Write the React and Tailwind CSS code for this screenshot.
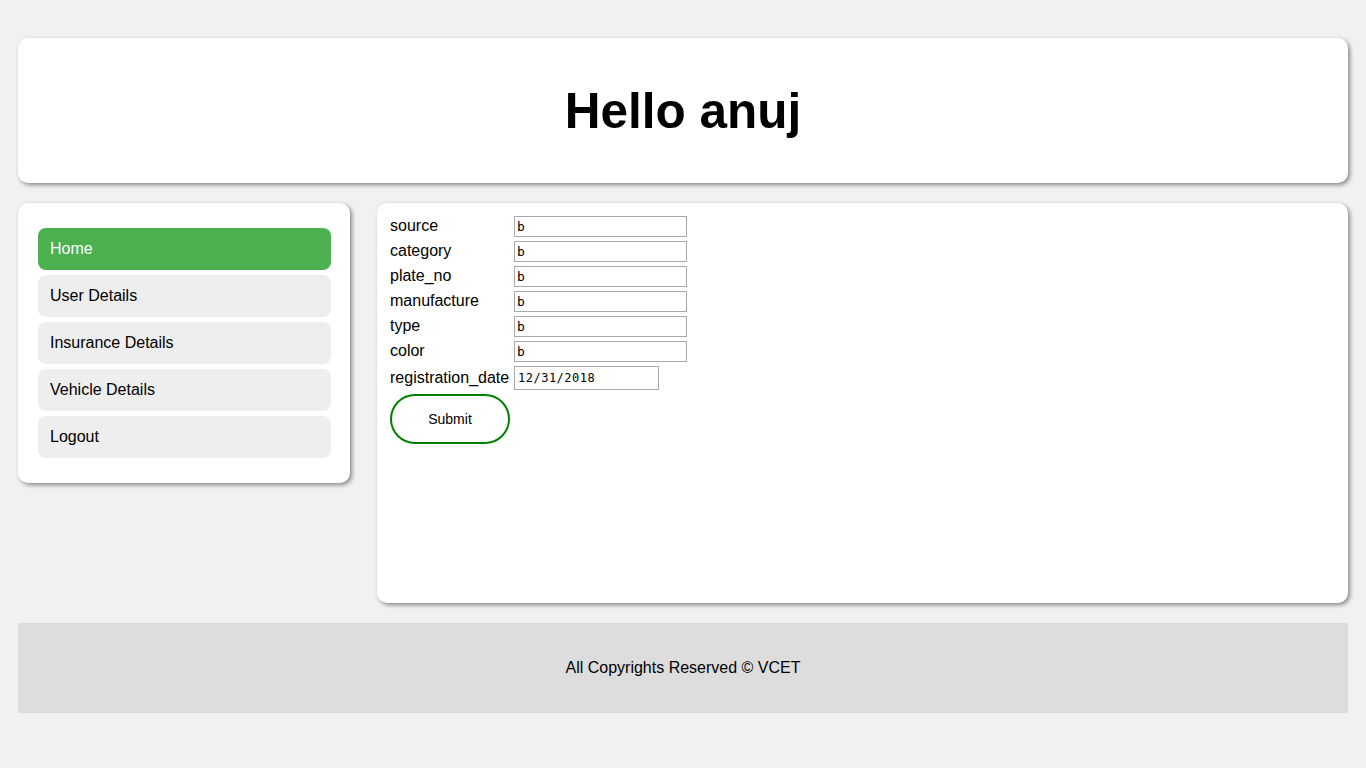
const fields = ['source', 'category', 'plate_no', 'manufacture', 'type', 'color']

const menu = ['Home', 'User Details', 'Insurance Details', 'Vehicle Details', 'Logout']

function Card({ className, children }) {
  return (
    <div className={`bg-white rounded-[10px] shadow-[2px_2px_4px_#888888] ${className}`}>
      {children}
    </div>
  )
}

export default function App() {
  return (
    <div className="min-h-screen bg-[#f1f1f1] px-[18px] pt-[38px] text-black font-['Liberation_Sans',Arial,sans-serif]">
      <Card className="h-[145px] flex items-center justify-center">
        <h1 className="text-[49.5px] font-bold leading-none">Hello anuj</h1>
      </Card>

      <div className="flex justify-between items-start mt-[20px]">
        <Card className="w-[332px] pl-[20px] pr-[19px] pt-[25px] pb-[25px]">
          <ul className="flex flex-col gap-[5px]">
            {menu.map((m, i) => (
              <li
                key={m}
                className={`h-[42px] flex items-center pl-[12px] rounded-[8px] text-[16px] ${
                  i === 0 ? 'bg-[#4caf50] text-white' : 'bg-[#eeeeee] text-black'
                }`}
              >
                {m}
              </li>
            ))}
          </ul>
        </Card>

        <Card className="w-[971px] h-[400px] pl-[13px] pt-[11px]">
          <form onSubmit={(e) => e.preventDefault()}>
            {fields.map((f) => (
              <div key={f} className="flex items-center h-[25px]">
                <label className="w-[124px] text-[16px] leading-none -mt-[2px]">{f}</label>
                <input
                  defaultValue="b"
                  className="w-[173px] h-[21px] border border-[#a9a9a9] px-[2px] text-[13px] font-['DejaVu_Sans_Mono',monospace] outline-none"
                />
              </div>
            ))}
            <div className="flex items-center h-[28px]">
              <label className="w-[124px] text-[16px] leading-none">registration_date</label>
              <input
                defaultValue="12/31/2018"
                className="w-[145px] h-[24px] border border-[#a9a9a9] px-[3px] text-[12px] tracking-[0.5px] font-['DejaVu_Sans_Mono',monospace] outline-none"
              />
            </div>
            <button
              type="submit"
              className="mt-[2px] w-[120px] h-[50px] rounded-[25px] border-2 border-[#008000] bg-white text-[14px]"
            >
              Submit
            </button>
          </form>
        </Card>
      </div>

      <footer className="mt-[20px] h-[90px] bg-[#dddddd] flex items-center justify-center text-[16px]">
        All Copyrights Reserved © VCET
      </footer>
    </div>
  )
}
